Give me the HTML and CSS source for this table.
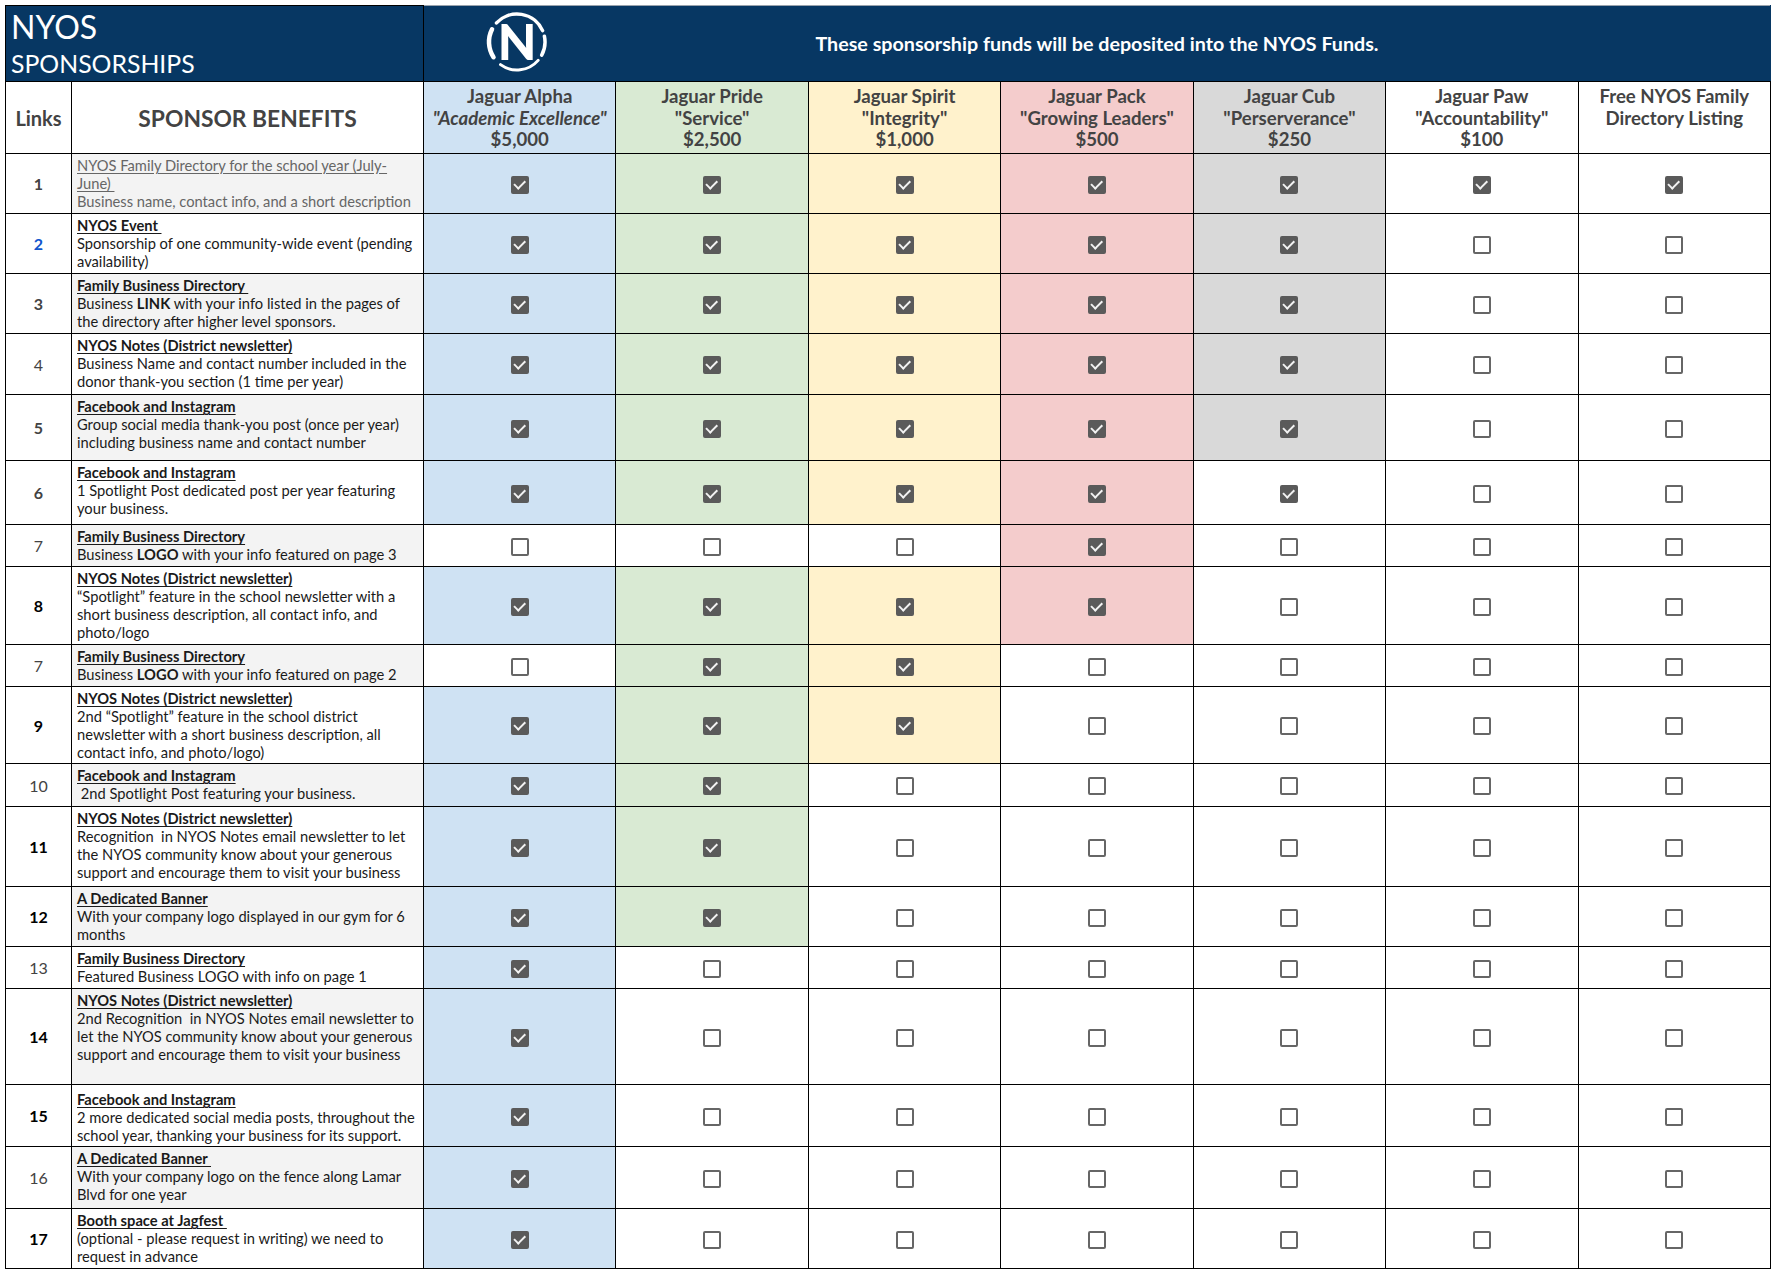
FILE: index.html
```html
<!DOCTYPE html>
<html lang="en">
<head>
<meta charset="utf-8">
<title>NYOS Sponsorships</title>
<link rel="stylesheet" href="styles.css">
</head>
<body>
<div class="page">
<table class="sheet">
  <colgroup>
    <col class="c-links">
    <col class="c-ben">
    <col><col><col><col><col><col><col>
  </colgroup>
  <tr class="h-banner">
    <td colspan="2" class="title-cell">
      <div class="t-big">NYOS</div>
      <div class="t-small">SPONSORSHIPS</div>
    </td>
    <td colspan="7" class="banner-cell">
      <div class="banner-grid">
        <div class="logo-wrap">
          <svg class="logo" width="62" height="60" viewBox="0 0 62 60" aria-label="NYOS logo">
            <g fill="none" stroke="#ffffff" stroke-linecap="round">
              <path d="M6.05 17.29 A28 28 0 0 0 7.52 45.25" stroke-width="4.5"/>
              <path d="M10.52 10.9 A28 28 0 0 1 56.58 18.61" stroke-width="3.5"/>
              <path d="M58.39 24.18 A28 28 0 0 1 55.72 43.15" stroke-width="3.5"/>
              <path d="M52.13 48.37 A28 28 0 0 1 14.54 52.65" stroke-width="3"/>
            </g>
            <text x="31" y="48" text-anchor="middle" class="logo-n">N</text>
          </svg>
        </div>
        <div class="banner-text">These sponsorship funds will be deposited into the NYOS Funds.</div>
        <div></div>
      </div>
    </td>
  </tr>
  <tr class="h-head">
    <td class="hd-links">Links</td>
    <td class="hd-ben">SPONSOR BENEFITS</td>
    <td class="hd-tier fill-a">Jaguar Alpha<br><i>"Academic Excellence"</i><br>$5,000</td>
    <td class="hd-tier fill-b">Jaguar Pride<br>"Service"<br>$2,500</td>
    <td class="hd-tier fill-c">Jaguar Spirit<br>"Integrity"<br>$1,000</td>
    <td class="hd-tier fill-d">Jaguar Pack<br>"Growing Leaders"<br>$500</td>
    <td class="hd-tier fill-e">Jaguar Cub<br>"Perserverance"<br>$250</td>
    <td class="hd-tier">Jaguar Paw<br>"Accountability"<br>$100</td>
    <td class="hd-tier">Free NYOS Family Directory Listing</td>
  </tr>

  <tr class="h60">
    <td class="num n-bold">1</td>
    <td class="ben alt muted"><div class="ttl"><span class="u">NYOS Family Directory for the school year (July-June)&nbsp;</span></div><div>Business name, contact info, and a short description</div></td>
    <td class="ck fill-a"><span class="cb on"></span></td>
    <td class="ck fill-b"><span class="cb on"></span></td>
    <td class="ck fill-c"><span class="cb on"></span></td>
    <td class="ck fill-d"><span class="cb on"></span></td>
    <td class="ck fill-e"><span class="cb on"></span></td>
    <td class="ck"><span class="cb on"></span></td>
    <td class="ck"><span class="cb on"></span></td>
  </tr>

  <tr class="h60">
    <td class="num n-link">2</td>
    <td class="ben"><div class="ttl b"><span class="u">NYOS Event&nbsp;</span></div><div>Sponsorship of one community-wide event (pending availability)</div></td>
    <td class="ck fill-a"><span class="cb on"></span></td>
    <td class="ck fill-b"><span class="cb on"></span></td>
    <td class="ck fill-c"><span class="cb on"></span></td>
    <td class="ck fill-d"><span class="cb on"></span></td>
    <td class="ck fill-e"><span class="cb on"></span></td>
    <td class="ck"><span class="cb"></span></td>
    <td class="ck"><span class="cb"></span></td>
  </tr>

  <tr class="h60">
    <td class="num n-bold">3</td>
    <td class="ben alt"><div class="ttl b"><span class="u">Family Business Directory&nbsp;</span></div><div>Business <b>LINK</b> with your info listed in the pages of the directory after higher level sponsors.</div></td>
    <td class="ck fill-a"><span class="cb on"></span></td>
    <td class="ck fill-b"><span class="cb on"></span></td>
    <td class="ck fill-c"><span class="cb on"></span></td>
    <td class="ck fill-d"><span class="cb on"></span></td>
    <td class="ck fill-e"><span class="cb on"></span></td>
    <td class="ck"><span class="cb"></span></td>
    <td class="ck"><span class="cb"></span></td>
  </tr>

  <tr class="h61">
    <td class="num n-reg">4</td>
    <td class="ben"><div class="ttl b"><span class="u">NYOS Notes (District newsletter)</span></div><div>Business Name and contact number included in the donor thank-you section (1 time per year)</div></td>
    <td class="ck fill-a"><span class="cb on"></span></td>
    <td class="ck fill-b"><span class="cb on"></span></td>
    <td class="ck fill-c"><span class="cb on"></span></td>
    <td class="ck fill-d"><span class="cb on"></span></td>
    <td class="ck fill-e"><span class="cb on"></span></td>
    <td class="ck"><span class="cb"></span></td>
    <td class="ck"><span class="cb"></span></td>
  </tr>

  <tr class="h66">
    <td class="num n-bold">5</td>
    <td class="ben alt"><div class="ttl b"><span class="u">Facebook and Instagram</span></div><div>Group social media thank-you post (once per year) including business name and contact number</div></td>
    <td class="ck fill-a"><span class="cb on"></span></td>
    <td class="ck fill-b"><span class="cb on"></span></td>
    <td class="ck fill-c"><span class="cb on"></span></td>
    <td class="ck fill-d"><span class="cb on"></span></td>
    <td class="ck fill-e"><span class="cb on"></span></td>
    <td class="ck"><span class="cb"></span></td>
    <td class="ck"><span class="cb"></span></td>
  </tr>

  <tr class="h64">
    <td class="num n-bold">6</td>
    <td class="ben"><div class="ttl b"><span class="u">Facebook and Instagram</span></div><div>1 Spotlight Post dedicated post per year featuring your business.</div></td>
    <td class="ck fill-a"><span class="cb on"></span></td>
    <td class="ck fill-b"><span class="cb on"></span></td>
    <td class="ck fill-c"><span class="cb on"></span></td>
    <td class="ck fill-d"><span class="cb on"></span></td>
    <td class="ck"><span class="cb on"></span></td>
    <td class="ck"><span class="cb"></span></td>
    <td class="ck"><span class="cb"></span></td>
  </tr>

  <tr class="h42">
    <td class="num n-reg">7</td>
    <td class="ben alt"><div class="ttl b"><span class="u">Family Business Directory</span></div><div>Business <b>LOGO</b> with your info featured on page 3</div></td>
    <td class="ck"><span class="cb"></span></td>
    <td class="ck"><span class="cb"></span></td>
    <td class="ck"><span class="cb"></span></td>
    <td class="ck fill-d"><span class="cb on"></span></td>
    <td class="ck"><span class="cb"></span></td>
    <td class="ck"><span class="cb"></span></td>
    <td class="ck"><span class="cb"></span></td>
  </tr>

  <tr class="h78">
    <td class="num n-black">8</td>
    <td class="ben"><div class="ttl b"><span class="u">NYOS Notes (District newsletter)</span></div><div>“Spotlight” feature in the school newsletter with a short business description, all contact info, and photo/logo</div></td>
    <td class="ck fill-a"><span class="cb on"></span></td>
    <td class="ck fill-b"><span class="cb on"></span></td>
    <td class="ck fill-c"><span class="cb on"></span></td>
    <td class="ck fill-d"><span class="cb on"></span></td>
    <td class="ck"><span class="cb"></span></td>
    <td class="ck"><span class="cb"></span></td>
    <td class="ck"><span class="cb"></span></td>
  </tr>

  <tr class="h42">
    <td class="num n-reg">7</td>
    <td class="ben alt"><div class="ttl b"><span class="u">Family Business Directory</span></div><div>Business <b>LOGO</b> with your info featured on page 2</div></td>
    <td class="ck"><span class="cb"></span></td>
    <td class="ck fill-b"><span class="cb on"></span></td>
    <td class="ck fill-c"><span class="cb on"></span></td>
    <td class="ck"><span class="cb"></span></td>
    <td class="ck"><span class="cb"></span></td>
    <td class="ck"><span class="cb"></span></td>
    <td class="ck"><span class="cb"></span></td>
  </tr>

  <tr class="h77">
    <td class="num n-black">9</td>
    <td class="ben"><div class="ttl b"><span class="u">NYOS Notes (District newsletter)</span></div><div>2nd “Spotlight” feature in the school district newsletter with a short business description, all contact info, and photo/logo)</div></td>
    <td class="ck fill-a"><span class="cb on"></span></td>
    <td class="ck fill-b"><span class="cb on"></span></td>
    <td class="ck fill-c"><span class="cb on"></span></td>
    <td class="ck"><span class="cb"></span></td>
    <td class="ck"><span class="cb"></span></td>
    <td class="ck"><span class="cb"></span></td>
    <td class="ck"><span class="cb"></span></td>
  </tr>

  <tr class="h43">
    <td class="num n-reg">10</td>
    <td class="ben alt"><div class="ttl b"><span class="u">Facebook and Instagram</span></div><div>&nbsp;2nd Spotlight Post featuring your business.</div></td>
    <td class="ck fill-a"><span class="cb on"></span></td>
    <td class="ck fill-b"><span class="cb on"></span></td>
    <td class="ck"><span class="cb"></span></td>
    <td class="ck"><span class="cb"></span></td>
    <td class="ck"><span class="cb"></span></td>
    <td class="ck"><span class="cb"></span></td>
    <td class="ck"><span class="cb"></span></td>
  </tr>

  <tr class="h80">
    <td class="num n-black">11</td>
    <td class="ben"><div class="ttl b"><span class="u">NYOS Notes (District newsletter)</span></div><div>Recognition &nbsp;in NYOS Notes email newsletter to let the NYOS community know about your generous support and encourage them to visit your business</div></td>
    <td class="ck fill-a"><span class="cb on"></span></td>
    <td class="ck fill-b"><span class="cb on"></span></td>
    <td class="ck"><span class="cb"></span></td>
    <td class="ck"><span class="cb"></span></td>
    <td class="ck"><span class="cb"></span></td>
    <td class="ck"><span class="cb"></span></td>
    <td class="ck"><span class="cb"></span></td>
  </tr>

  <tr class="h60">
    <td class="num n-black">12</td>
    <td class="ben alt"><div class="ttl b"><span class="u">A Dedicated Banner</span></div><div>With your company logo displayed in our gym for 6 months</div></td>
    <td class="ck fill-a"><span class="cb on"></span></td>
    <td class="ck fill-b"><span class="cb on"></span></td>
    <td class="ck"><span class="cb"></span></td>
    <td class="ck"><span class="cb"></span></td>
    <td class="ck"><span class="cb"></span></td>
    <td class="ck"><span class="cb"></span></td>
    <td class="ck"><span class="cb"></span></td>
  </tr>

  <tr class="h42">
    <td class="num n-reg">13</td>
    <td class="ben"><div class="ttl b"><span class="u">Family Business Directory</span></div><div>Featured Business LOGO with info on page 1</div></td>
    <td class="ck fill-a"><span class="cb on"></span></td>
    <td class="ck"><span class="cb"></span></td>
    <td class="ck"><span class="cb"></span></td>
    <td class="ck"><span class="cb"></span></td>
    <td class="ck"><span class="cb"></span></td>
    <td class="ck"><span class="cb"></span></td>
    <td class="ck"><span class="cb"></span></td>
  </tr>

  <tr class="h96">
    <td class="num n-black">14</td>
    <td class="ben alt"><div class="ttl b"><span class="u">NYOS Notes (District newsletter)</span></div><div>2nd Recognition &nbsp;in NYOS Notes email newsletter to let the NYOS community know about your generous support and encourage them to visit your business</div></td>
    <td class="ck fill-a"><span class="cb on"></span></td>
    <td class="ck"><span class="cb"></span></td>
    <td class="ck"><span class="cb"></span></td>
    <td class="ck"><span class="cb"></span></td>
    <td class="ck"><span class="cb"></span></td>
    <td class="ck"><span class="cb"></span></td>
    <td class="ck"><span class="cb"></span></td>
  </tr>

  <tr class="h62">
    <td class="num n-black">15</td>
    <td class="ben mid"><div class="ttl b"><span class="u">Facebook and Instagram</span></div><div>2 more dedicated social media posts, throughout the school year, thanking your business for its support.</div></td>
    <td class="ck fill-a"><span class="cb on"></span></td>
    <td class="ck"><span class="cb"></span></td>
    <td class="ck"><span class="cb"></span></td>
    <td class="ck"><span class="cb"></span></td>
    <td class="ck"><span class="cb"></span></td>
    <td class="ck"><span class="cb"></span></td>
    <td class="ck"><span class="cb"></span></td>
  </tr>

  <tr class="h62">
    <td class="num n-reg">16</td>
    <td class="ben alt"><div class="ttl b"><span class="u">A Dedicated Banner&nbsp;</span></div><div>With your company logo on the fence along Lamar Blvd for one year</div></td>
    <td class="ck fill-a"><span class="cb on"></span></td>
    <td class="ck"><span class="cb"></span></td>
    <td class="ck"><span class="cb"></span></td>
    <td class="ck"><span class="cb"></span></td>
    <td class="ck"><span class="cb"></span></td>
    <td class="ck"><span class="cb"></span></td>
    <td class="ck"><span class="cb"></span></td>
  </tr>

  <tr class="h60">
    <td class="num n-black">17</td>
    <td class="ben"><div class="ttl b"><span class="u">Booth space at Jagfest&nbsp;</span></div><div>(optional - please request in writing) we need to request in advance</div></td>
    <td class="ck fill-a"><span class="cb on"></span></td>
    <td class="ck"><span class="cb"></span></td>
    <td class="ck"><span class="cb"></span></td>
    <td class="ck"><span class="cb"></span></td>
    <td class="ck"><span class="cb"></span></td>
    <td class="ck"><span class="cb"></span></td>
    <td class="ck"><span class="cb"></span></td>
  </tr>
</table>
</div>
</body>
</html>
```

FILE: styles.css
```css
html, body {
  margin: 0;
  padding: 0;
  background: #ffffff;
}

body {
  font-family: "Lato", "Liberation Sans", sans-serif;
  color: #222222;
}

.page {
  padding: 5px 0 0 5px;
}

.sheet {
  border-collapse: collapse;
  table-layout: fixed;
  width: 1766px;
}

.c-links { width: 66px; }
.c-ben { width: 352px; }

.sheet td {
  border: 1px solid #000000;
  padding: 0;
}

/* row heights */
.h-banner { height: 76px; }
.h-head { height: 72px; }
.h42 { height: 42px; }
.h43 { height: 43px; }
.h60 { height: 60px; }
.h61 { height: 61px; }
.h62 { height: 62px; }
.h64 { height: 64px; }
.h66 { height: 66px; }
.h77 { height: 77px; }
.h78 { height: 78px; }
.h80 { height: 80px; }
.h96 { height: 96px; }

/* banner */
.title-cell {
  background: #073763;
  color: #ffffff;
  vertical-align: top;
}

.sheet .title-cell {
  padding: 3px 0 0 5px;
}

.t-big {
  font-size: 32px;
  line-height: 35px;
}

.t-small {
  font-size: 24.8px;
  line-height: 25px;
  margin-top: 7px;
}

.sheet .banner-cell {
  background: #073763;
  border-top-color: #9aa3ad;
  border-right-color: #073763;
}

.banner-grid {
  display: grid;
  grid-template-columns: 1fr auto 1fr;
  align-items: center;
  height: 74px;
}

.logo-wrap {
  padding-left: 62px;
  padding-bottom: 4px;
  display: flex;
  align-items: center;
}

.logo {
  display: block;
}

.logo-n {
  fill: #ffffff;
  font-family: "Lato", "Liberation Sans", sans-serif;
  font-weight: 900;
  font-size: 50px;
}

.banner-text {
  color: #ffffff;
  font-weight: 700;
  font-size: 19.7px;
  white-space: nowrap;
}

/* column header row */
.hd-links {
  text-align: center;
  font-weight: 700;
  font-size: 20px;
  color: #434343;
}

.hd-ben {
  text-align: center;
  font-weight: 700;
  font-size: 22.8px;
  color: #434343;
}

.sheet .hd-tier {
  text-align: center;
  vertical-align: top;
  font-weight: 700;
  font-size: 18.6px;
  line-height: 21.7px;
  color: #434343;
  padding: 4px 4px 0;
}

/* fills */
.fill-a { background: #cfe2f3; }
.fill-b { background: #d9ead3; }
.fill-c { background: #fff2cc; }
.fill-d { background: #f4cccc; }
.fill-e { background: #d9d9d9; }

/* body rows */
.num {
  text-align: center;
  font-size: 16px;
}

.n-reg { color: #434343; font-weight: 400; }
.n-bold { color: #434343; font-weight: 700; }
.n-black { color: #000000; font-weight: 700; }
.n-link { color: #1155cc; font-weight: 700; }

.sheet .ben {
  vertical-align: top;
  font-size: 14.7px;
  line-height: 18px;
  color: #1a1a1a;
  padding: 2px 3px 0 5px;
}

.sheet .ben.mid {
  padding-top: 5px;
}

.ben.alt {
  background: #f3f3f3;
}

.ben.muted {
  color: #666666;
}

.ttl.b {
  font-weight: 700;
  color: #1a1a1a;
}

.u {
  text-decoration: underline;
  text-underline-offset: 2px;
}

.ck {
  text-align: center;
  vertical-align: middle;
}

.cb {
  display: inline-block;
  position: relative;
  width: 18px;
  height: 18px;
  box-sizing: border-box;
  border: 2px solid #666666;
  border-radius: 2px;
  background: #ffffff;
  vertical-align: middle;
}

.cb.on {
  background: #5a5a5a;
  border-color: #5a5a5a;
}

.cb.on::after {
  content: "";
  position: absolute;
  left: 1px;
  top: 2px;
  width: 9px;
  height: 4.5px;
  border: solid #f2f2f2;
  border-width: 0 0 2px 2px;
  transform: rotate(-45deg);
}
```
